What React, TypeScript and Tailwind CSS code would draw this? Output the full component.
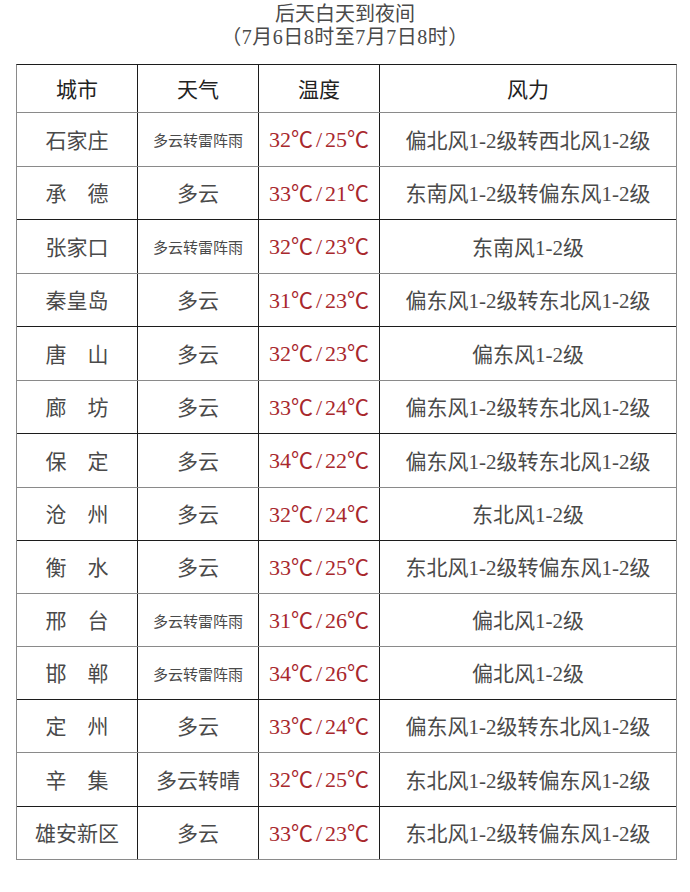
import React from 'react';

type Row = {
  city: string;
  weather: string;
  temp: string;
  wind: string;
  h: string;
  line: string;
};

const BLACK = 'border-b-[#1c1c1c]';
const GRAY = 'border-b-[#8a8a8a]';

const rows: Row[] = [
  { city: '石家庄', weather: '多云转雷阵雨', temp: '32/25', wind: '偏北风1-2级转西北风1-2级', h: 'h-[54px]', line: GRAY },
  { city: '承\u3000德', weather: '多云', temp: '33/21', wind: '东南风1-2级转偏东风1-2级', h: 'h-[53px]', line: BLACK },
  { city: '张家口', weather: '多云转雷阵雨', temp: '32/23', wind: '东南风1-2级', h: 'h-[54px]', line: GRAY },
  { city: '秦皇岛', weather: '多云', temp: '31/23', wind: '偏东风1-2级转东北风1-2级', h: 'h-[53px]', line: BLACK },
  { city: '唐\u3000山', weather: '多云', temp: '32/23', wind: '偏东风1-2级', h: 'h-[54px]', line: GRAY },
  { city: '廊\u3000坊', weather: '多云', temp: '33/24', wind: '偏东风1-2级转东北风1-2级', h: 'h-[53px]', line: BLACK },
  { city: '保\u3000定', weather: '多云', temp: '34/22', wind: '偏东风1-2级转东北风1-2级', h: 'h-[54px]', line: GRAY },
  { city: '沧\u3000州', weather: '多云', temp: '32/24', wind: '东北风1-2级', h: 'h-[53px]', line: BLACK },
  { city: '衡\u3000水', weather: '多云', temp: '33/25', wind: '东北风1-2级转偏东风1-2级', h: 'h-[53px]', line: GRAY },
  { city: '邢\u3000台', weather: '多云转雷阵雨', temp: '31/26', wind: '偏北风1-2级', h: 'h-[53px]', line: GRAY },
  { city: '邯\u3000郸', weather: '多云转雷阵雨', temp: '34/26', wind: '偏北风1-2级', h: 'h-[53px]', line: BLACK },
  { city: '定\u3000州', weather: '多云', temp: '33/24', wind: '偏东风1-2级转东北风1-2级', h: 'h-[53px]', line: GRAY },
  { city: '辛\u3000集', weather: '多云转晴', temp: '32/25', wind: '东北风1-2级转偏东风1-2级', h: 'h-[54px]', line: BLACK },
  { city: '雄安新区', weather: '多云', temp: '33/23', wind: '东北风1-2级转偏东风1-2级', h: 'h-[53px]', line: GRAY },
];

const font = { fontFamily: '"Liberation Serif", "Noto Sans CJK SC", serif' };

const cell = 'flex items-center justify-center pt-[4px] border-r border-r-[#1c1c1c]';
const tempCell = 'flex items-center justify-center pb-[2px] border-r border-r-[#1c1c1c]';

// 温度：最高/最低，℃ 用全角字形
const Temp = ({ value }: { value: string }) => {
  const [hi, lo] = value.split('/');
  return (
    <span className="whitespace-nowrap leading-none">
      {hi}
      <span className="font-['Noto_Sans_CJK_SC']">℃</span>
      <span className="mx-[3px]">/</span>
      {lo}
      <span className="font-['Noto_Sans_CJK_SC']">℃</span>
    </span>
  );
};

export default function App() {
  return (
    <div className="w-[690px] h-[892px] bg-white overflow-hidden" style={font}>
      {/* 标题 */}
      <div className="pt-[3px] text-center text-[20px] leading-[23px] text-[#4a4a4a]">
        <div>后天白天到夜间</div>
        <div className="tracking-[0.5px]">（7月6日8时至7月7日8时）</div>
      </div>

      <div className="ml-[16px] mt-[15px] w-[661px] border-t border-t-[#1c1c1c] border-l border-r border-l-[#8a8a8a] border-r-[#8a8a8a]">
        {/* 表头 */}
        <div className="grid grid-cols-[121px_121px_121px_1fr] h-[48px] border-b border-b-[#8a8a8a] text-[21px] text-[#222]">
          <div className={cell}>城市</div>
          <div className={cell}>天气</div>
          <div className={cell}>温度</div>
          <div className="flex items-center justify-center pt-[4px]">风力</div>
        </div>

        {rows.map((r) => (
          <div
            key={r.city}
            className={`grid grid-cols-[121px_121px_121px_1fr] border-b ${r.h} ${r.line} text-[21px] text-[#4a4a4a]`}
          >
            <div className={cell}>{r.city}</div>
            <div className={`${cell} ${r.weather.length > 4 ? 'text-[15px]' : 'text-[21px]'}`}>{r.weather}</div>
            <div className={`${tempCell} text-[22px] text-[#a8282d]`}>
              <Temp value={r.temp} />
            </div>
            <div className="flex items-center justify-center pt-[4px] whitespace-nowrap">{r.wind}</div>
          </div>
        ))}
      </div>
    </div>
  );
}
